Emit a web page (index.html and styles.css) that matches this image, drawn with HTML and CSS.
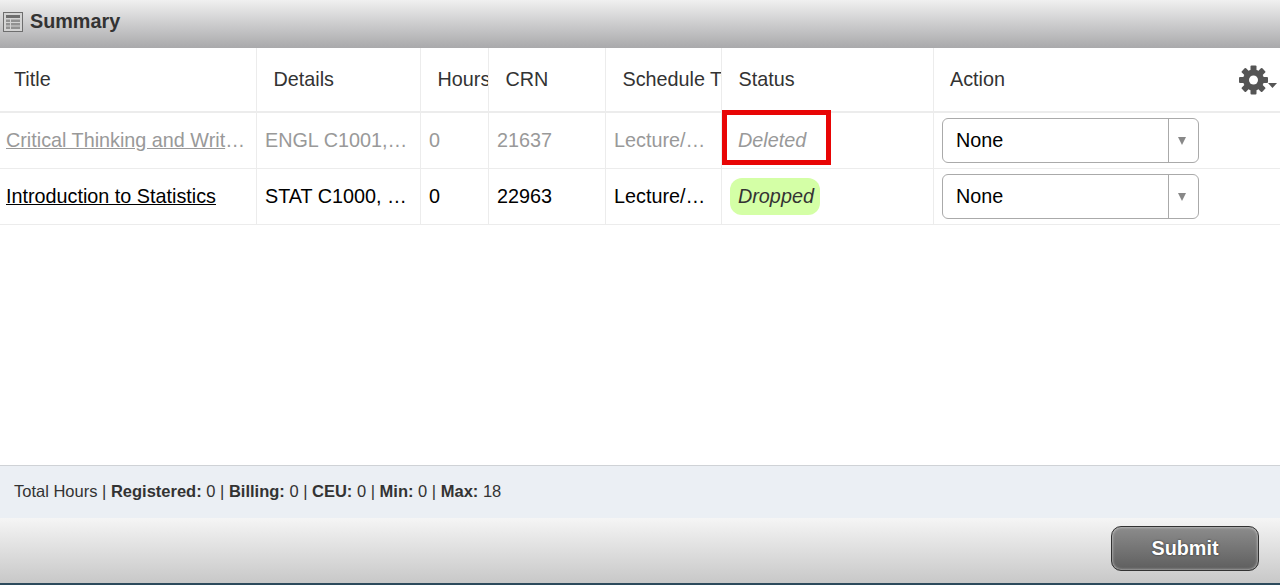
FILE: index.html
```html
<!DOCTYPE html>
<html lang="en">
<head>
  <meta charset="UTF-8">
  <title>Summary</title>
  <link rel="stylesheet" href="styles.css">
</head>
<body>
  <div class="header">
    <svg class="header-icon" width="20" height="20" viewBox="0 0 20 20">
      <rect x="0.500" y="0.500" width="19" height="19" fill="#d4d4d4" stroke="#6e6e6e"/>
      <rect x="3" y="3" width="14" height="3" fill="#6e6e6e"/>
      <path d="M3 7.500h4v2.500h-4zM8 7.500h9v2.500h-9zM3 11h4v2.500h-4zM8 11h9v2.500h-9zM3 14.500h4v2.500h-4zM8 14.500h9v2.500h-9z" fill="#929292"/>
    </svg>
    <span class="header-title">Summary</span>
  </div>

  <div class="table-wrap">
    <table class="grid">
      <colgroup>
        <col class="col-title">
        <col class="col-details">
        <col class="col-hours">
        <col class="col-crn">
        <col class="col-schedule">
        <col class="col-status">
        <col class="col-action">
      </colgroup>
      <thead>
        <tr>
          <th>Title</th>
          <th>Details</th>
          <th>Hours</th>
          <th>CRN</th>
          <th>Schedule Type</th>
          <th>Status</th>
          <th class="action-head">
            Action
            <svg class="gear" width="40" height="30" viewBox="0 0 40 30">
              <g fill="#555">
                <circle cx="14.500" cy="15" r="10.500"/>
                <rect x="11.500" y="0.500" width="6" height="29" rx="1"/>
                <rect x="11.500" y="0.500" width="6" height="29" rx="1" transform="rotate(45 14.500 15)"/>
                <rect x="11.500" y="0.500" width="6" height="29" rx="1" transform="rotate(90 14.500 15)"/>
                <rect x="11.500" y="0.500" width="6" height="29" rx="1" transform="rotate(135 14.500 15)"/>
                <path d="M29 18h9l-4.500 5z"/>
              </g>
              <circle cx="14.500" cy="15" r="4.500" fill="#fff"/>
            </svg>
          </th>
        </tr>
      </thead>
      <tbody>
        <tr class="row-deleted">
          <td><a class="title-link" href="#">Critical Thinking and Writing</a></td>
          <td>ENGL C1001, Section 1</td>
          <td>0</td>
          <td>21637</td>
          <td>Lecture/Discussion</td>
          <td class="status-cell">
            <span class="status">Deleted</span>
            <div class="highlight-box"></div>
          </td>
          <td class="action-cell">
            <div class="select-box"><span class="select-value">None</span><span class="select-arrow"></span></div>
          </td>
        </tr>
        <tr>
          <td><a class="title-link" href="#">Introduction to Statistics</a></td>
          <td>STAT C1000, Section 1</td>
          <td>0</td>
          <td>22963</td>
          <td>Lecture/Discussion</td>
          <td class="status-cell"><span class="status status-dropped">Dropped</span></td>
          <td class="action-cell">
            <div class="select-box"><span class="select-value">None</span><span class="select-arrow"></span></div>
          </td>
        </tr>
      </tbody>
    </table>
  </div>

  <div class="totals">
    Total Hours | <b>Registered:</b> 0 | <b>Billing:</b> 0 | <b>CEU:</b> 0 | <b>Min:</b> 0 | <b>Max:</b> 18
  </div>

  <div class="footer">
    <button class="submit">Submit</button>
  </div>
</body>
</html>
```

FILE: styles.css
```css
body {
  margin: 0;
  display: flex;
  flex-direction: column;
  height: 585px;
  overflow: hidden;
  background: #fff;
  font-family: "Liberation Sans", Arial, sans-serif;
  color: #000;
}

.header {
  height: 48px;
  flex: none;
  display: flex;
  align-items: flex-start;
  gap: 7px;
  padding: 12px 0 0 3px;
  box-sizing: border-box;
  background: linear-gradient(#f0f0f0, #a9a9ab);
}

.header-title {
  font-size: 19.8px;
  font-weight: bold;
  line-height: 19px;
  color: #333;
}

.table-wrap {
  flex: 1;
}

.grid {
  border-collapse: separate;
  border-spacing: 0;
  table-layout: fixed;
  width: 1280px;
}

.col-title { width: 257px; }
.col-details { width: 164px; }
.col-hours { width: 68px; }
.col-crn { width: 117px; }
.col-schedule { width: 116px; }
.col-status { width: 212px; }

.grid th {
  height: 65px;
  padding: 0 0 1px 14px;
  box-sizing: border-box;
  text-align: left;
  font-size: 19.8px;
  font-weight: normal;
  color: #333;
  white-space: nowrap;
  overflow: hidden;
  border-right: 1px solid #ececec;
  border-bottom: 2px solid #ececec;
}

.grid th:nth-child(n+2) {
  padding-left: 16.500px;
}

.grid th:last-child,
.grid td:last-child {
  border-right: none;
}

.grid th.action-head {
  padding-left: 16px;
}

.grid td {
  height: 56px;
  box-sizing: border-box;
  padding: 0 8px 0 6px;
  font-size: 19.8px;
  white-space: nowrap;
  overflow: hidden;
  text-overflow: ellipsis;
  border-right: 1px solid #ececec;
  border-bottom: 1px solid #ececec;
}

.grid td:nth-child(n+2) {
  padding-left: 8px;
}

.action-head {
  position: relative;
}

.gear {
  position: absolute;
  right: 1px;
  top: 17px;
}

.title-link {
  color: inherit;
}

.row-deleted td {
  color: #999;
}

.grid td.status-cell {
  position: relative;
  overflow: visible;
}

.status {
  display: inline-block;
  padding: 0 6px 0 8px;
  font-style: italic;
  line-height: 37px;
  border-radius: 12px;
  color: #333;
}

.row-deleted .status {
  color: #999;
}

.status-dropped {
  background: #d4ffa6;
}

.highlight-box {
  position: absolute;
  left: 0;
  top: -3px;
  width: 99px;
  height: 45px;
  border: 5px solid #e80505;
}

.select-box {
  display: flex;
  align-items: center;
  width: 257px;
  height: 45px;
  box-sizing: border-box;
  background: #fff;
  border: 1px solid #aaa;
  border-radius: 6px;
  color: #000;
}

.select-value {
  flex: 1;
  padding-left: 13px;
}

.select-arrow {
  width: 26px;
  height: 100%;
  padding-right: 3px;
  display: flex;
  align-items: center;
  justify-content: center;
  border-left: 1px solid #aaa;
}

.select-arrow::after {
  content: "";
  border-left: 4.500px solid transparent;
  border-right: 4.500px solid transparent;
  border-top: 8px solid #888;
}

.totals {
  flex: none;
  height: 52px;
  line-height: 50px;
  padding-left: 14px;
  background: #ebeff4;
  border-top: 1px solid #cfd2d6;
  font-size: 16.5px;
  color: #333;
}

.footer {
  flex: none;
  height: 67px;
  display: flex;
  justify-content: flex-end;
  align-items: flex-start;
  padding: 8px 21px 0 0;
  box-sizing: border-box;
  background: linear-gradient(#f5f5f5, #c8c8c8);
  border-bottom: 2px solid #2c4a5c;
}

.submit {
  width: 148px;
  height: 45px;
  border: 1px solid #333;
  border-radius: 10px;
  background: linear-gradient(#8c8c8c, #5e5e5e);
  box-shadow: inset 0 0 3px #ddd;
  color: #fff;
  font-family: inherit;
  font-size: 19.8px;
  font-weight: bold;
  text-shadow: 0 0 2px #222;
}
```
